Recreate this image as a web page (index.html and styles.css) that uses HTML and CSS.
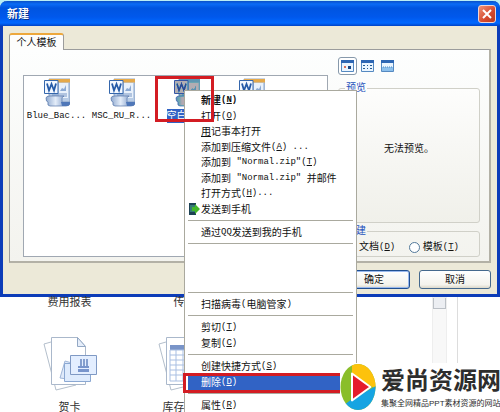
FILE: index.html
```html
<!DOCTYPE html>
<html lang="zh-CN">
<head>
<meta charset="utf-8">
<title>新建</title>
<link rel="stylesheet" href="styles.css">
</head>
<body>
<svg class="defs" aria-hidden="true">
  <defs>
    <linearGradient id="scroll" x1="0" y1="0" x2="1" y2="0"><stop offset="0" stop-color="#8fa9cf"/><stop offset=".4" stop-color="#e4edf9"/><stop offset="1" stop-color="#5479b4"/></linearGradient>
    <symbol id="word" viewBox="0 0 26 29">
      <path d="M5 1H26V24H5Z" fill="#b8cce6" stroke="#7892b8" stroke-width=".8"/>
      <path d="M5 1H26V4.500H5Z" fill="#e5a94a"/>
      <path d="M15 5H24V20H15Z" fill="#e9f1fb"/>
      <path d="M16 13l2-3 2 1 2-4v6z" fill="#8aa9d4"/>
      <path d="M8 16h15M8 18h15" stroke="#7897c5"/>
      <path d="M2 20q0-2 4-2h14q-3 1-2 5v2h8q0 3-4 3H6q-3 0-2-4-2 0-2-4z" fill="url(#scroll)" stroke="#5677aa" stroke-width=".7"/>
      <path d="M17 24h9q0 4-4 4h-4z" fill="#4f77b8"/>
      <path d="M.500 2.500H14V15.500H.500Z" fill="#f3f8ff" stroke="#3567ac"/>
      <path d="M3 5.500l2 7 2.500-6.500 2.500 6.500 2-7" fill="none" stroke="#245aa8" stroke-width="1.800"/>
    </symbol>
  </defs>
</svg>
<main class="screen">
  <section class="dialog" role="dialog" aria-label="新建">
    <header class="titlebar">
      <h1>新建</h1>
      <button class="close" type="button" aria-label="关闭"><svg viewBox="0 0 10 10"><path d="M1 1l8 8M9 1L1 9"/></svg></button>
    </header>
    <div class="client">
      <button class="tab" type="button">个人模板</button>
      <div class="panel">
        <div class="templates">
          <div class="template"><svg><use href="#word"/></svg><span class="latin">Blue_Bac...</span></div>
          <div class="template"><svg><use href="#word"/></svg><span class="latin">MSC_RU_R...</span></div>
          <div class="template selected"><svg><use href="#word"/></svg><span>空白文档</span></div>
          <div class="template"><svg><use href="#word"/></svg></div>
        </div>
        <div class="side">
          <div class="views">
            <button class="view active" type="button" aria-label="大图标"><svg viewBox="0 0 13 12"><path class="frame" d="M.500.500h12v11H.500z"/><path class="bar" d="M0 0h13v3H0z"/><path d="M3 6h2v2H3z" fill="#d6705c"/><path d="M7 6h3v3H7z" fill="#174583"/></svg></button>
            <button class="view" type="button" aria-label="列表"><svg viewBox="0 0 13 12"><path class="frame" d="M.500.500h12v11H.500z"/><path class="bar" d="M0 0h13v3H0z"/><path d="M2 5h2v1H2zm4 0h1v1H6zm3 0h2v1H9zM2 8h2v1H2zm4 0h1v1H6zm3 0h2v1H9z" fill="#245a91"/></svg></button>
            <button class="view" type="button" aria-label="详细信息"><svg viewBox="0 0 13 12"><path class="frame" d="M.500.500h12v11H.500z"/><path class="bar" d="M0 0h13v3H0z"/><path d="M1 7h11v4H1z" fill="#8dc0ec"/><path d="M2 7h9" stroke="#4f88c0" stroke-dasharray="1 1"/></svg></button>
          </div>
          <fieldset class="preview"><legend>预览</legend><p>无法预览。</p></fieldset>
          <fieldset class="create"><legend>新建</legend>
            <div class="options">
              <label><input type="radio" name="kind" checked>文档<span class="latin">(<u>D</u>)</span></label>
              <label><input type="radio" name="kind">模板<span class="latin">(<u>T</u>)</span></label>
            </div>
          </fieldset>
        </div>
      </div>
      <div class="actions">
        <button class="default" type="button">确定</button>
        <button type="button">取消</button>
      </div>
    </div>
  </section>

  <section class="gallery">
    <div class="samples">
      <span class="caption">费用报表</span>
      <span class="caption">传真</span>
      <div class="sample">
        <svg viewBox="0 0 54 54"><path d="M8 5L1 7l12 46 20-5" fill="#fff" stroke="#b4bfcc"/><path d="M8.500.500h26l8 9v38h-34z" fill="#fff" stroke="#aab8cb"/><path d="M34.500.500v9h8z" fill="#e6eefa" stroke="#93a8c4"/><path d="M22 24l-5 17 22 3 4-14z" fill="#dfeafa" stroke="#a0b6d8"/><path d="M21.500 26.500h26v18h-26z" fill="#deebfd" stroke="#8ba8d2"/><path d="M27.500 18.500h26v19h-26z" fill="#e3eeff" stroke="#7f99c4"/><path d="M35 29h11v2H35zm0 3h11v3H35z" fill="#7895cc"/><path d="M38 22v7m3-7v7m3-7v7" stroke="#6685bf" stroke-width="1.500"/></svg>
        <span>贺卡</span>
      </div>
      <div class="sample">
        <svg viewBox="0 0 54 54"><path d="M8 5L1 7l12 46 20-5" fill="#fff" stroke="#b4bfcc"/><path d="M8.500.500h34v47h-34z" fill="#fff" stroke="#aab8cb"/><path d="M12 8h28v5H12z" fill="#7994c8"/><path d="M12 13h28v31H12zM12 18h28M12 23h28M12 28h28M12 33h28M12 38h28M18 13v31M25 13v31M32 13v31" fill="none" stroke="#a9bfe2"/></svg>
        <span>库存清单</span>
      </div>
    </div>
    <div class="scrollbar"><div class="thumb"></div></div>
    <div class="pane"></div>
  </section>

  <div class="menu" role="menu">
    <div class="group eight">
      <a href="#new" class="bold">新建<span class="latin">(<u>N</u>)</span></a>
      <a href="#open">打开<span class="latin">(<u>O</u>)</span></a>
      <a href="#notepad"><u>用</u>记事本打开</a>
      <a href="#archive">添加到压缩文件<span class="latin">(<u>A</u>) ...</span></a>
      <a href="#zip">添加到<span class="latin"> "Normal.zip"(<u>T</u>)</span></a>
      <a href="#mail">添加到<span class="latin"> "Normal.zip" </span>并邮件</a>
      <a href="#with">打开方式<span class="latin">(<u>H</u>)...</span></a>
      <a href="#phone"><svg class="phone" viewBox="0 0 12 12"><path d="M1 0h7v12H1z" fill="#1d4254"/><path d="M2 2h5v7H2z" fill="#357b74"/><path d="M4 4h3V1l5 5-5 5V8H4z" fill="#43b829"/></svg>发送到手机</a>
    </div>
    <hr>
    <div class="group"><a href="#qq">通过<span class="latin">QQ</span>发送到我的手机</a></div>
    <hr class="spaced">
    <hr>
    <div class="group"><a href="#scan">扫描病毒<span class="latin">(</span>电脑管家<span class="latin">)</span></a></div>
    <hr>
    <div class="group two">
      <a href="#cut">剪切<span class="latin">(<u>T</u>)</span></a>
      <a href="#copy">复制<span class="latin">(<u>C</u>)</span></a>
    </div>
    <hr>
    <div class="group two">
      <a href="#shortcut">创建快捷方式<span class="latin">(<u>S</u>)</span></a>
      <a href="#delete" class="active">删除<span class="latin">(<u>D</u>)</span></a>
    </div>
    <hr>
    <div class="group"><a href="#props">属性<span class="latin">(<u>R</u>)</span></a></div>
  </div>

  <div class="mark file-mark"></div>
  <div class="mark delete-mark"></div>

  <div class="brand">
    <svg viewBox="0 0 36 48"><defs><clipPath id="oval"><ellipse cx="18" cy="24" rx="17.500" ry="23"/></clipPath></defs><g clip-path="url(#oval)"><path d="M0 0h36v48H0z" fill="#8abe2a"/><path d="M12 0h24v26L12 12z" fill="#fdc20c"/><path d="M36 23v25H0V45L12 36z" fill="#16a4e2"/></g><path d="M12 10.500L30.500 24 12 37.500z" fill="#e51c2b" stroke="#fff" stroke-width="2" stroke-linejoin="round"/></svg>
    <div><strong>爱尚资源网</strong><small>集聚全网精品PPT素材资源的网站</small></div>
  </div>
</main>
</body>
</html>
```
FILE: styles.css
```css
* { box-sizing: border-box; }
body {
  margin: 0;
  background: #fff;
  color: #111;
  font: 10px/16px "Liberation Sans", "Noto Sans CJK SC", sans-serif;
}
button { font: inherit; color: inherit; padding: 0; }
.defs { position: absolute; width: 0; height: 0; }
.screen { position: relative; height: 100vh; overflow: hidden; background: linear-gradient(#b9eef5 8px, #fff 8px); }
.latin { font-family: "Liberation Mono", monospace; font-size: 9px; white-space: pre; }

/* Dialog window */
.dialog { margin-top: 1px; border: solid #0c3cb8; border-width: 0 3px 3px; border-radius: 7px 7px 0 0; background: #ece9d8; }
.titlebar {
  display: flex; align-items: center; justify-content: space-between;
  height: 25px; margin: 0 -3px; padding: 0 4px 0 7px;
  border-radius: 7px 7px 0 0;
  background: linear-gradient(#0a50c8, #0a6cf5 3px, #0055e0 7px, #0058ec 16px, #0068ff 22px, #0042c4);
}
h1 { margin: 0; color: #fff; font-size: 11px; font-weight: bold; text-shadow: 1px 1px #0a318c; }
.close { display: grid; place-items: center; width: 18px; height: 18px; border: 1px solid #f1d5d2; border-radius: 3px; background: linear-gradient(135deg, #ee9376, #d5492e 60%, #ba3b21); }
.close svg { width: 10px; height: 10px; stroke: #fff; stroke-width: 2; }
.client { padding: 7px 6px 5px; }
.tab { display: block; position: relative; width: 55px; height: 17px; margin-bottom: -1px; border: 1px solid #9b9c9c; border-top: 2px solid #eda83c; border-bottom: 0; border-radius: 3px 3px 0 0; background: #fdfdfc; line-height: 14px; }
.panel { display: flex; gap: 10px; height: 214px; padding: 15px 9px 4px 13px; border: 1px solid #9b9c9c; border-right: 2px solid #b3b1a6; border-bottom: 2px solid #b3b1a6; background: linear-gradient(#fdfefe, #f3f3ee); }
.templates { flex: 1; display: grid; grid-template-columns: repeat(4, 65px); align-content: start; margin-top: 10px; padding-top: 2px; border: 1px solid #a0a8b2; background: #fff; }
.template { display: flex; flex-direction: column; align-items: center; line-height: 14px; gap: 2px; }
.template svg { width: 26px; height: 29px; }
.selected span { background: #3163c5; color: #fff; }
.selected svg { filter: sepia(1) hue-rotate(185deg) saturate(4) brightness(.7); }
.side { width: 142px; display: flex; flex-direction: column; gap: 2px; }
.views { display: flex; gap: 1px; margin: -8px 0 5px; }
.view { display: grid; place-items: center; width: 19px; height: 18px; border: 1px solid transparent; background: none; }
.view.active { border-color: #8799ab; border-radius: 3px; background: #fff; }
.view svg { width: 13px; height: 12px; }
.frame { fill: #eaf5ff; stroke: #5589c1; }
.bar { fill: #2e67b4; }
fieldset { min-width: 0; margin: 0; padding: 0; border: 1px solid #d0d0c8; border-radius: 3px; }
legend { margin-left: 6px; padding: 0 1px; color: #2754bd; line-height: 12px; }
.preview { flex: 1; display: grid; place-items: center; background: linear-gradient(#fdfdfc, #f0f0ea); }
.preview p { margin: 0; padding-bottom: 18px; }
.create { height: 32px; }
.options { display: flex; justify-content: space-between; padding: 2px 20px 0 6px; }
label { display: flex; align-items: center; line-height: 16px; }
label input { appearance: none; width: 11px; height: 11px; margin: 0 3px 0 0; border: 1px solid #52799a; border-radius: 50%; background: #fff; }
.actions { display: flex; justify-content: flex-end; gap: 9px; margin-top: 7px; }
.actions button { width: 72px; height: 19px; border: 1px solid #45698d; border-radius: 3px; background: linear-gradient(#fff, #f4f3ed 80%, #dcd8ca); line-height: 16px; }
.actions .default { border-color: #204f91; box-shadow: inset 0 0 0 1px #9ab9ed; }

/* Template gallery behind the dialog */
.gallery { display: flex; height: 116px; background: #fff; color: #333; }
.samples { flex: 1; display: grid; grid-template: 40px 76px / 115px 115px; padding-left: 12px; font-size: 11px; }
.caption { text-align: center; line-height: 10px; }
.sample { display: flex; flex-direction: column; align-items: center; gap: 8px; }
.sample svg { width: 54px; height: 54px; flex: none; }
.scrollbar { width: 15px; border: 1px solid #eee; background: #f8f8f8; }
.thumb { height: 11px; border: 1px solid #bbc0c6; border-top: 0; background: #eceef2; }
.pane { width: 43px; margin-left: 10px; border-left: 1px solid #ddd; }

/* Context menu */
.menu { position: absolute; left: 184px; top: 90px; width: 173px; padding: 2px 3px; border: 1px solid #aaa99e; background: #fff; }
.group { display: flex; flex-direction: column; height: 16px; }
.eight { height: 124px; }
.two { height: 32px; }
.menu a { position: relative; flex: 1; display: flex; align-items: center; min-height: 0; padding-left: 13px; color: #111; line-height: 15px; text-decoration: none; white-space: pre; }
.menu .bold { font-weight: bold; }
.menu .active { background: #3163c5; color: #fff; }
.menu hr { height: 1px; margin: 3px 0; border: 0; background: #aaa99e; }
.menu .spaced { margin-bottom: 48px; }
.phone { position: absolute; left: 0; width: 12px; height: 12px; }

.mark { position: absolute; border: 3px solid #d31c23; }
.file-mark { left: 155px; top: 76px; width: 59px; height: 46px; }
.delete-mark { left: 183px; top: 373px; width: 172px; height: 20px; }

/* Site badge */
.brand { position: absolute; right: 0; bottom: 0; display: flex; gap: 5px; width: 160px; height: 49px; background: #fff; color: #2d2d2d; white-space: nowrap; }
.brand svg { width: 36px; height: 48px; flex: none; }
.brand strong, .brand small { display: block; }
.brand strong { font-size: 24px; line-height: 36px; }
.brand small { font-size: 8px; line-height: 10px; }
```
